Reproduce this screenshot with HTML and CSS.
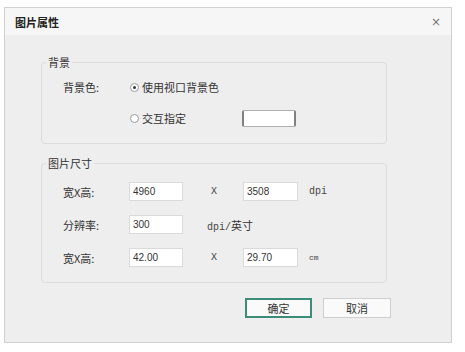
FILE: index.html
```html
<!DOCTYPE html>
<html>
<head>
    <meta charset="utf-8">
    <title>图片属性</title>
    <link rel="stylesheet" href="styles.css">
</head>
<body>
    <div class="dialog">
        <div class="title-bar">
            <span class="title">图片属性</span>
            <span class="close">×</span>
        </div>

        <div class="dialog-body">
            <fieldset class="group">
                <legend>背景</legend>
                <div class="bg-grid">
                    <span class="label">背景色:</span>
                    <label class="radio"><input type="radio" name="bg" checked>使用视口背景色</label>
                    <span></span>
                    <span></span>
                    <label class="radio"><input type="radio" name="bg">交互指定</label>
                    <span class="color-box"></span>
                </div>
            </fieldset>

            <fieldset class="group">
                <legend>图片尺寸</legend>
                <div class="size-grid">
                    <span class="label">宽X高:</span>
                    <input class="field" type="text" value="4960">
                    <span class="mono times">X</span>
                    <input class="field wide" type="text" value="3508">
                    <span class="mono unit">dpi</span>

                    <span class="label">分辨率:</span>
                    <input class="field" type="text" value="300">
                    <span class="unit-wide"><span class="mono">dpi/</span>英寸</span>

                    <span class="label">宽X高:</span>
                    <input class="field" type="text" value="42.00">
                    <span class="mono times">X</span>
                    <input class="field wide" type="text" value="29.70">
                    <span class="mono unit small">cm</span>
                </div>
            </fieldset>

            <div class="footer">
                <button class="btn btn-primary">确定</button>
                <button class="btn">取消</button>
            </div>
        </div>
    </div>
</body>
</html>
```

FILE: styles.css
```css
body {
    margin: 0;
    background: #ffffff;
    font-family: "Noto Sans CJK SC", "Noto Sans", sans-serif;
    font-size: 11px;
    color: #333;
}
.dialog {
    margin: 7px 0 0 4px;
    width: 446px;
    height: 334px;
    border: 1px solid #d0d0d0;
    background: #eeeeee;
    display: flex;
    flex-direction: column;
}
.title-bar {
    height: 27px;
    background: #f6f6f6;
    display: flex;
    align-items: center;
    justify-content: space-between;
    padding: 0 10px 0 10px;
}
.title {
    font-weight: bold;
    font-size: 11px;
    color: #222;
}
.close {
    font-family: "DejaVu Sans", sans-serif;
    font-size: 12px;
    color: #777;
}
.dialog-body {
    flex: 1;
    padding: 20px 0 0 36px;
}
.group {
    margin: 0 0 12px 0;
    padding: 0;
    width: 344px;
    border: 1px solid #dcdcdc;
    border-radius: 4px;
}
.group legend {
    margin-left: 4px;
    padding: 0 2px;
    font-size: 11px;
    line-height: 14px;
    color: #333;
}
.bg-grid {
    display: grid;
    grid-template-columns: 66px 113px auto;
    row-gap: 11px;
    padding: 8px 0 15px 21px;
    align-items: center;
}
.bg-grid > * {
    height: 20px;
    display: flex;
    align-items: center;
}
.radio {
    display: flex;
    align-items: center;
    white-space: nowrap;
}
.radio input {
    appearance: none;
    width: 9px;
    height: 9px;
    margin: 0 3px 0 1px;
    border: 1px solid #9a9a9a;
    border-radius: 50%;
    background: #fff;
    position: relative;
}
.radio input:checked::after {
    content: "";
    position: absolute;
    left: 2px;
    top: 2px;
    width: 3px;
    height: 3px;
    border-radius: 50%;
    background: #333;
}
.bg-grid .color-box {
    width: 50px;
    height: 15px;
    border: 1px solid #b0b0b0;
    border-left: 2px solid #808080;
    border-right: 2px solid #808080;
    border-radius: 2px;
    background: #fff;
}
.size-grid {
    display: grid;
    grid-template-columns: 66px 54px 60px 55px auto;
    row-gap: 14px;
    padding: 12px 0 15px 21px;
    align-items: center;
}
.times {
    padding-left: 28px;
}
.unit {
    padding-left: 11px;
}
.unit-wide {
    grid-column: 3 / span 3;
    padding-left: 24px;
}
.field {
    box-sizing: border-box;
    width: 54px;
    height: 19px;
    margin: 0;
    padding: 0 3px;
    border: 1px solid #dadada;
    background: #fff;
    font-family: "Liberation Sans", sans-serif;
    font-size: 10px;
    color: #333;
    outline: none;
}
.field.wide {
    width: 55px;
}
.mono {
    font-family: "Liberation Mono", monospace;
    font-size: 10px;
    color: #444;
}
.small {
    font-size: 8px;
}
.footer {
    display: flex;
    justify-content: flex-end;
    gap: 11px;
    padding-right: 60px;
    margin-top: 15px;
}
.btn {
    box-sizing: border-box;
    width: 68px;
    height: 20px;
    padding: 0;
    border: 1px solid #cfcfcf;
    background: #fafafa;
    font-family: "Noto Sans CJK SC", sans-serif;
    font-size: 11px;
    color: #333;
}
.btn-primary {
    width: 67px;
    border: 2px solid #3b8c78;
}
```
